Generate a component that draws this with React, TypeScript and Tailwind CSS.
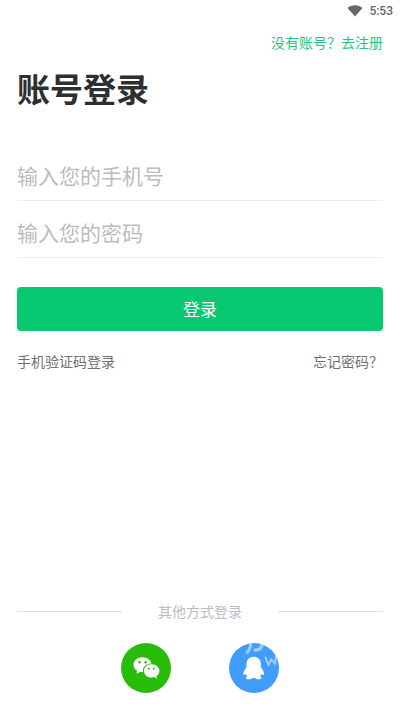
import React from "react";

function StatusBar() {
  return (
    <div className="flex h-[22px] items-center justify-end gap-[6px] pr-[7px]">
      <svg className="h-[12px] w-[16px]" viewBox="0 0 16 12" fill="#666666" aria-label="Wi-Fi">
        <path d="M8 11.6 0.5 3C2.4 1.2 5.1 0.200 8 0.200s5.600 1 7.500 2.800z" />
      </svg>
      <span className="font-[Roboto,sans-serif] text-[12px] leading-[22px] font-medium text-[#666666]">5:53</span>
    </div>
  );
}

function Field({ id, type, label }: { id: string; type: string; label: string }) {
  return (
    <div className="h-[57px] border-b border-[#ededed]">
      <input
        id={id}
        type={type}
        aria-label={label}
        placeholder={label}
        className="block h-[56px] w-full bg-transparent pt-[6px] text-[21px] text-[#333333] outline-none placeholder:text-[#bcbcbc]"
      />
    </div>
  );
}

function WeChatIcon() {
  return (
    <svg className="size-[50px]" viewBox="0 0 50 50" aria-hidden="true">
      <path
        fill="#fff"
        d="M21.500 14.200c-5 0-9 3.300-9 7.500 0 2.400 1.300 4.400 3.400 5.800l-.3 3.300 3.600-1.900c.8.2 1.600.2 2.400.2h.6c-1.300-5 3-8.600 8.100-8.600h.2c-.8-3.500-4.500-6.300-9-6.300z"
      />
      <path
        fill="#fff"
        d="M30.500 21.300c-4.300 0-7.500 2.900-7.500 6.600s3.200 6.600 7.500 6.600c.9 0 1.800-.2 2.600-.4l2.700 1.500-.4-2.400c1.800-1.200 3-3.100 3-5.300 0-3.700-3.500-6.600-7.900-6.600z"
      />
      <g fill="#28bd09">
        <circle cx="18.500" cy="19.200" r="1.200" />
        <circle cx="24.600" cy="19.200" r="1.200" />
        <circle cx="27.800" cy="25.700" r="1" />
        <circle cx="32.600" cy="25.700" r="1" />
      </g>
    </svg>
  );
}

function QQIcon() {
  return (
    <svg className="size-[50px]" viewBox="0 0 50 50" aria-hidden="true">
      <path
        fill="#fff"
        d="M24.700 13.800c-4.400 0-7 3-7.200 7.200v3.200c-1.600 2-3 4.200-3.100 6.500 0 1.200.6 1.600 1.300 1.300.6-.2 1-.6 1.400-1 .3.900.7 1.700 1.300 2.300-.9.4-1.400 1-1.400 1.600 0 .9 1.200 1.300 3 1.300 1.500 0 2.600-.3 3-1.300h3.400c.4 1 1.500 1.300 3 1.300 1.800 0 3-.4 3-1.300 0-.6-.5-1.200-1.400-1.600.6-.6 1-1.400 1.300-2.300.4.400.8.800 1.400 1 .7.300 1.300-.1 1.300-1.300-.1-2.300-1.500-4.500-3.100-6.500v-3.200c-.2-4.200-2.800-7.200-7.200-7.200z"
      />
      <g stroke="#fff" strokeOpacity="0.500" fill="none" strokeLinecap="round">
        <path strokeWidth="3.200" d="M21.500 1c0 3.500-.8 6-3.300 8.200M26 7.200c4.200-.4 7-2.700 7.300-6.200" />
        <path strokeWidth="1.900" d="m36.500 14.500 3 7.500 2.800-5.500 3.700 4.200 1-7.700" />
      </g>
    </svg>
  );
}

export default function App() {
  return (
    <div className="flex min-h-screen flex-col bg-white font-['Noto_Sans_CJK_SC',sans-serif]">
      <StatusBar />
      <main className="flex flex-1 flex-col px-[17px] pb-[17px]">
        <div className="flex justify-end pt-[10px]">
          <a href="#register" className="text-[14px] leading-[20px] text-[#1dc87c]">
            没有账号？去注册
          </a>
        </div>
        <h1 className="mt-[12px] text-[33px] leading-[48px] font-bold text-[#2d2f30]">账号登录</h1>

        <form onSubmit={(e) => e.preventDefault()} className="mt-[32px]">
          <Field id="phone" type="tel" label="输入您的手机号" />
          <Field id="password" type="password" label="输入您的密码" />
          <button
            type="submit"
            className="mt-[29px] block h-[44px] w-full rounded-[4px] bg-[#08c871] text-[17px] text-white"
          >
            登录
          </button>
        </form>

        <div className="mt-[20px] flex justify-between text-[14px] leading-[20px] text-[#707070]">
          <a href="#code">手机验证码登录</a>
          <a href="#forgot">忘记密码？</a>
        </div>

        <section className="mt-auto">
          <div className="flex items-center gap-[36px] text-[14px] leading-[20px] text-[#b8bcc3]">
            <div className="h-px flex-1 bg-[#dddfe2]" />
            <span>其他方式登录</span>
            <div className="h-px flex-1 bg-[#dddfe2]" />
          </div>
          <div className="mt-[22px] flex justify-center gap-[58px]">
            <button type="button" aria-label="微信登录" className="size-[50px] overflow-hidden rounded-full bg-[#28bd09]">
              <WeChatIcon />
            </button>
            <button type="button" aria-label="QQ登录" className="size-[50px] overflow-hidden rounded-full bg-[#429cfb]">
              <QQIcon />
            </button>
          </div>
        </section>
      </main>
    </div>
  );
}
